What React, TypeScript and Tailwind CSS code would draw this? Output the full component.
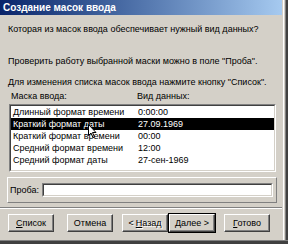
import React from 'react';

const rows = [
  { mask: 'Длинный формат времени', view: '0:00:00' },
  { mask: 'Краткий формат даты', view: '27.09.1969' },
  { mask: 'Краткий формат времени', view: '00:00' },
  { mask: 'Средний формат времени', view: '12:00' },
  { mask: 'Средний формат даты', view: '27-сен-1969' },
];

const btn =
  'h-[18px] w-[46px] flex items-center justify-center bg-[#d4d0c8] border border-t-white border-l-white border-r-[#404040] border-b-[#404040] shadow-[inset_-1px_-1px_#808080] text-black';

export default function App() {
  const selected = 1;

  return (
    <div
      className="w-[288px] h-[244px] bg-[#d4d0c8] flex flex-col overflow-hidden relative text-[9px] leading-[11px] text-black"
      style={{ fontFamily: '"Liberation Sans", Arial, sans-serif' }}
    >
      <div className="flex h-[240px]">
        <div className="w-[282px] flex flex-col">
          <div className="h-[15px] bg-linear-to-r from-[#0a246a] to-[#a6caf0] text-white font-bold text-[10px] pl-[3px] flex items-center shrink-0">
            Создание масок ввода
          </div>

          <div className="pl-[8px] flex flex-col">
            <p className="mt-[9px]">Которая из масок ввода обеспечивает нужный вид данных?</p>
            <p className="mt-[21px]">Проверить работу выбранной маски можно в поле "Проба".</p>
            <p className="mt-[10px]">Для изменения списка масок ввода нажмите кнопку "Список".</p>

            <div className="flex mt-[3px] pl-[3px]">
              <span className="w-[126px]">Маска ввода:</span>
              <span>Вид данных:</span>
            </div>
          </div>

          <div className="ml-[9px] mr-[6px] mt-[2px] h-[68px] border border-t-[#808080] border-l-[#808080] border-r-white border-b-white">
            <div className="h-full bg-white border border-t-[#404040] border-l-[#404040] border-r-[#d4d0c8] border-b-[#d4d0c8]">
              {rows.map((r, i) => (
                <div
                  key={i}
                  className={`flex h-[12px] items-center pl-[2px] leading-[12px] ${
                    i === selected ? 'bg-black text-white' : ''
                  }`}
                >
                  <span className="w-[125px]">{r.mask}</span>
                  <span>{r.view}</span>
                </div>
              ))}
            </div>
          </div>

          <div className="ml-[7px] mr-[5px] mt-[5px] h-[26px] border border-t-white border-l-white border-r-[#808080] border-b-[#808080] flex items-center pl-[2px] pr-[3px] gap-[3px]">
            <span>Проба:</span>
            <div className="flex-1 h-[14px] border border-t-[#808080] border-l-[#808080] border-r-white border-b-white">
              <div className="h-full bg-white border border-t-[#404040] border-l-[#404040] border-r-[#d4d0c8] border-b-[#d4d0c8]" />
            </div>
          </div>

          <div className="mt-[4px] h-[2px] border-t border-t-[#808080] border-b border-b-white" />

          <div className="flex mt-[5px] pl-[8px]">
            <button className={btn}>
              <span><u>С</u>писок</span>
            </button>
            <button className={`${btn} ml-[13px]`}>Отмена</button>
            <button className={`${btn} ml-[9px] text-[#808080] [text-shadow:1px_1px_0_white]`}>
              &lt; <u className="ml-[2px]">Н</u>азад
            </button>
            <button className={`${btn} ml-[1px] outline outline-1 outline-black`}>
              <span><u>Д</u>алее &gt;</span>
            </button>
            <button className={`${btn} ml-[9px]`}>
              <span><u>Г</u>отово</span>
            </button>
          </div>
        </div>

        <div className="flex flex-1">
          <div className="w-[1px] bg-[#d4d0c8]" />
          <div className="w-[1px] bg-white" />
          <div className="w-[1px] bg-[#d4d0c8]" />
          <div className="w-[1px] bg-[#808080]" />
          <div className="flex-1 bg-[#404040]" />
        </div>
      </div>
      <div className="h-[1px] bg-[#808080]" />
      <div className="flex-1 bg-[#404040]" />

      <svg
        className="absolute left-[88px] top-[124px]"
        width="9"
        height="15"
        viewBox="0 0 9 15"
      >
        <path
          d="M0.5 0.5 L0.5 11.5 L3 9 L5 13.5 L6.5 13 L4.5 8.5 L8 8.5 Z"
          fill="white"
          stroke="black"
          strokeWidth="1"
        />
      </svg>
    </div>
  );
}
